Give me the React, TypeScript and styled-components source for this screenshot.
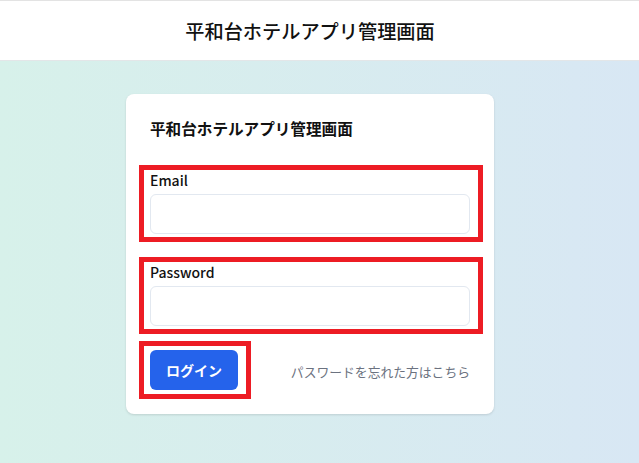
import React from "react";
import styled, { createGlobalStyle } from "styled-components";

const GlobalStyle = createGlobalStyle`
  html, body {
    margin: 0;
    padding: 0;
  }
  body {
    font-family: "Noto Sans CJK JP", "Noto Sans", sans-serif;
    color: #111827;
  }
  * { box-sizing: border-box; }
`;

const Page = styled.div`
  min-height: 100vh;
  display: flex;
  flex-direction: column;
  background: linear-gradient(90deg, #d7f1ea 0%, #d8e7f4 100%);
`;

const Header = styled.header`
  height: 61px;
  background: #ffffff;
  border-top: 1px solid #e3e3e3;
  border-bottom: 1px solid #e3e6e8;
  display: flex;
  align-items: center;
  justify-content: center;
  padding-right: 19px;
`;

const HeaderTitle = styled.h1`
  margin: 0;
  font-size: 19.2px;
  line-height: 24px;
  font-weight: 500;
  color: #111111;
`;

const Main = styled.main`
  display: flex;
  justify-content: center;
  padding: 33px 19px 0 0;
`;

const Card = styled.div`
  width: 368px;
  background: #ffffff;
  border-radius: 8px;
  box-shadow: 0 1px 3px rgba(0, 0, 0, 0.08), 0 1px 2px rgba(0, 0, 0, 0.05);
  padding: 24px 24px 15px;
  display: flex;
  flex-direction: column;
`;

const CardTitle = styled.h2`
  margin: 0;
  font-size: 15.6px;
  line-height: 20px;
  font-weight: 700;
  color: #111111;
`;

const Highlight = styled.div<{ $mt: number }>`
  margin: ${(p) => p.$mt}px -13px 0 -11px;
  border: 5px solid #ed1c24;
  padding: 0 8px 3px 6px;
  display: flex;
  flex-direction: column;
`;

const Label = styled.label`
  font-size: 14px;
  line-height: 20px;
  font-weight: 500;
  color: #111111;
`;

const Input = styled.input`
  margin-top: 4px;
  height: 40px;
  width: 100%;
  border: 1px solid #e2e8f0;
  border-radius: 6px;
  background: #ffffff;
  outline: none;
  padding: 0 12px;
  font: inherit;
`;

const ActionRow = styled.div`
  margin-top: 7px;
  display: flex;
  align-items: center;
  justify-content: space-between;
`;

const ButtonHighlight = styled.div`
  margin-left: -11px;
  border: 5px solid #ed1c24;
  padding: 4px 8px 4px 6px;
  display: flex;
`;

const LoginButton = styled.button`
  width: 88px;
  height: 40px;
  border: none;
  border-radius: 6px;
  background: #2563eb;
  color: #ffffff;
  font-family: inherit;
  font-size: 14px;
  font-weight: 700;
  cursor: pointer;
`;

const ForgotLink = styled.a`
  font-size: 12.8px;
  line-height: 18px;
  color: #6b7280;
  text-decoration: none;
  padding-top: 3px;
  cursor: pointer;
`;

export default function App() {
  return (
    <>
      <GlobalStyle />
      <Page>
        <Header>
          <HeaderTitle>平和台ホテルアプリ管理画面</HeaderTitle>
        </Header>
        <Main>
          <Card>
            <CardTitle>平和台ホテルアプリ管理画面</CardTitle>
            <Highlight $mt={27}>
              <Label htmlFor="email">Email</Label>
              <Input id="email" type="email" />
            </Highlight>
            <Highlight $mt={15}>
              <Label htmlFor="password">Password</Label>
              <Input id="password" type="password" />
            </Highlight>
            <ActionRow>
              <ButtonHighlight>
                <LoginButton type="button">ログイン</LoginButton>
              </ButtonHighlight>
              <ForgotLink>パスワードを忘れた方はこちら</ForgotLink>
            </ActionRow>
          </Card>
        </Main>
      </Page>
    </>
  );
}
